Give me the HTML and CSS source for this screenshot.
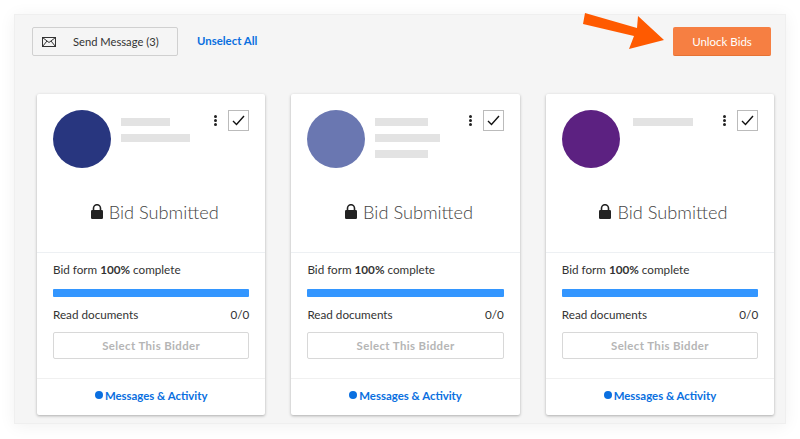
FILE: index.html
```html
<!DOCTYPE html>
<html lang="en">
<head>
    <meta charset="UTF-8">
    <meta name="viewport" content="width=device-width, initial-scale=1.0">
    <title>Unlock Bids</title>
    <link rel="stylesheet" href="styles.css">
</head>
<body>

<div class="panel">
    <div class="toolbar">
        <button class="send-btn">
            <svg class="mail-icon" width="14" height="10" viewBox="0 0 14 10">
                <rect x="0.5" y="0.5" width="13" height="9" fill="none" stroke="#333" stroke-width="1"/>
                <path d="M0.5 0.5L7 5.5L13.5 0.5M0.5 9.5L5 4M13.5 9.5L9 4" fill="none" stroke="#333" stroke-width="1"/>
            </svg>
            <span class="send-label">Send Message (3)</span>
        </button>
        <a href="#" class="unselect">Unselect All</a>
        <button class="unlock-btn">Unlock Bids</button>
    </div>

    <!-- callout pointing at the unlock button -->
    <svg class="arrow" width="82" height="37" viewBox="0 0 82 37">
        <path d="M2 0L54 15L55 3L81 27L46 36L51 23L0 11Z" fill="#ff5a00"/>
    </svg>

    <div class="cards">
        <div class="card">
            <div class="card-top">
                <div class="avatar avatar-navy"></div>
                <div class="name-lines">
                    <span class="line line-49"></span>
                    <span class="line line-69"></span>
                </div>
                <div class="card-tools">
                    <span class="kebab"><i></i><i></i><i></i></span>
                    <span class="check">
                        <svg width="13" height="11" viewBox="0 0 13 11"><path d="M1 6L4.5 9.5L12 1" fill="none" stroke="#111" stroke-width="1.4"/></svg>
                    </span>
                </div>
            </div>
            <div class="status">
                <svg class="lock" width="12" height="15" viewBox="0 0 12 15"><path d="M2.5 6V4.2a3.5 3.5 0 0 1 7 0V6" fill="none" stroke="#222" stroke-width="1.6"/><rect x="0" y="6" width="12" height="9" rx="1.2" fill="#222"/></svg>
                <span>Bid Submitted</span>
            </div>
            <div class="card-body">
                <p class="row">Bid form&nbsp;<b>100%</b>&nbsp;complete</p>
                <div class="bar"></div>
                <p class="row row-split"><span>Read documents</span><span>0/0</span></p>
                <button class="select-btn">Select This Bidder</button>
            </div>
            <div class="card-foot"><a href="#"><i class="dot"></i>Messages &amp; Activity</a></div>
        </div>

        <div class="card">
            <div class="card-top">
                <div class="avatar avatar-slate"></div>
                <div class="name-lines">
                    <span class="line line-53"></span>
                    <span class="line line-65"></span>
                    <span class="line line-53"></span>
                </div>
                <div class="card-tools">
                    <span class="kebab"><i></i><i></i><i></i></span>
                    <span class="check">
                        <svg width="13" height="11" viewBox="0 0 13 11"><path d="M1 6L4.5 9.5L12 1" fill="none" stroke="#111" stroke-width="1.4"/></svg>
                    </span>
                </div>
            </div>
            <div class="status">
                <svg class="lock" width="12" height="15" viewBox="0 0 12 15"><path d="M2.5 6V4.2a3.5 3.5 0 0 1 7 0V6" fill="none" stroke="#222" stroke-width="1.6"/><rect x="0" y="6" width="12" height="9" rx="1.2" fill="#222"/></svg>
                <span>Bid Submitted</span>
            </div>
            <div class="card-body">
                <p class="row">Bid form&nbsp;<b>100%</b>&nbsp;complete</p>
                <div class="bar"></div>
                <p class="row row-split"><span>Read documents</span><span>0/0</span></p>
                <button class="select-btn">Select This Bidder</button>
            </div>
            <div class="card-foot"><a href="#"><i class="dot"></i>Messages &amp; Activity</a></div>
        </div>

        <div class="card">
            <div class="card-top">
                <div class="avatar avatar-purple"></div>
                <div class="name-lines name-lines-single">
                    <span class="line line-60"></span>
                </div>
                <div class="card-tools">
                    <span class="kebab"><i></i><i></i><i></i></span>
                    <span class="check">
                        <svg width="13" height="11" viewBox="0 0 13 11"><path d="M1 6L4.5 9.5L12 1" fill="none" stroke="#111" stroke-width="1.4"/></svg>
                    </span>
                </div>
            </div>
            <div class="status">
                <svg class="lock" width="12" height="15" viewBox="0 0 12 15"><path d="M2.5 6V4.2a3.5 3.5 0 0 1 7 0V6" fill="none" stroke="#222" stroke-width="1.6"/><rect x="0" y="6" width="12" height="9" rx="1.2" fill="#222"/></svg>
                <span>Bid Submitted</span>
            </div>
            <div class="card-body">
                <p class="row">Bid form&nbsp;<b>100%</b>&nbsp;complete</p>
                <div class="bar"></div>
                <p class="row row-split"><span>Read documents</span><span>0/0</span></p>
                <button class="select-btn">Select This Bidder</button>
            </div>
            <div class="card-foot"><a href="#"><i class="dot"></i>Messages &amp; Activity</a></div>
        </div>
    </div>
</div>

</body>
</html>
```

FILE: styles.css
```css
/* Basic reset */
* {
    margin: 0;
    padding: 0;
    box-sizing: border-box;
}

body {
    font-family: Lato, "Open Sans", sans-serif;
    background-color: #fff;
    color: #333;
    width: 800px;
    height: 439px;
    overflow: hidden;
    padding: 14px;
}

/* Outer panel */
.panel {
    position: relative;
    width: 772px;
    height: 410px;
    background-color: #f5f5f5;
    border: 1px solid #efefef;
    box-shadow: 0 2px 16px rgba(0, 0, 0, 0.06);
    padding: 12px 11px 0 22px;
}

/* Toolbar */
.toolbar {
    display: flex;
    align-items: center;
    height: 29px;
    padding-right: 3px;
    margin-left: -5px;
}

.send-btn {
    display: flex;
    align-items: center;
    width: 146px;
    height: 29px;
    padding-left: 9px;
    background-color: #f5f5f5;
    border: 1px solid #d0d0d0;
    border-radius: 2px;
    font-family: inherit;
    font-size: 11.2px;
    color: #333;
}

.send-label {
    margin-left: 17px;
}

.unselect {
    margin-left: 19px;
    margin-bottom: 2px;
    color: #0a6fe0;
    font-size: 11.4px;
    font-weight: 700;
    text-decoration: none;
}

.unlock-btn {
    margin-left: auto;
    width: 98px;
    height: 29px;
    background-color: #f67f42;
    border: none;
    border-bottom: 1px solid #e57234;
    border-radius: 2px;
    color: #fff;
    font-family: inherit;
    font-size: 11.5px;
}

.arrow {
    position: absolute;
    left: 568px;
    top: -2px;
}

/* Bidder cards */
.cards {
    display: grid;
    grid-template-columns: repeat(3, 228.4px);
    column-gap: 26px;
    margin-top: 38px;
}

.card {
    height: 321px;
    background-color: #fff;
    border-radius: 2px;
    box-shadow: 0 1px 3px rgba(0, 0, 0, 0.3);
    display: flex;
    flex-direction: column;
}

.card-top {
    display: flex;
    height: 92px;
    padding: 16px 16px 0;
}

.avatar {
    flex: none;
    width: 58px;
    height: 58px;
    border-radius: 50%;
}

.avatar-navy {
    background-color: #28367f;
}

.avatar-slate {
    background-color: #6a77b1;
}

.avatar-purple {
    background-color: #5c2181;
}

.name-lines {
    display: flex;
    flex-direction: column;
    gap: 8px;
    margin: 8px 0 0 10px;
}

.name-lines-single {
    margin-left: 13px;
}

.line {
    display: block;
    height: 8px;
    background-color: #e3e3e3;
}

.line-49 {
    width: 49px;
}

.line-53 {
    width: 53px;
}

.line-60 {
    width: 60px;
}

.line-65 {
    width: 65px;
}

.line-69 {
    width: 69px;
}

.card-tools {
    display: flex;
    align-items: flex-start;
    margin-left: auto;
}

.kebab {
    display: flex;
    flex-direction: column;
    gap: 1px;
    margin: 5px 11px 0 0;
}

.kebab i {
    display: block;
    width: 3px;
    height: 3px;
    border-radius: 50%;
    background-color: #222;
}

.check {
    display: flex;
    align-items: center;
    justify-content: center;
    width: 21px;
    height: 21px;
    background-color: #fff;
    border: 1px solid #bbb;
}

.status {
    display: flex;
    align-items: center;
    justify-content: center;
    gap: 6px;
    height: 67px;
    padding: 0 0 15px 7px;
    font-size: 18.2px;
    font-weight: 300;
    color: #444;
    border-bottom: 1px solid #edf0f3;
}

.card-body {
    height: 126px;
    padding: 7px 16px 0;
    border-bottom: 1px solid #f0f0f0;
}

.row {
    display: flex;
    font-size: 11.7px;
    line-height: 18px;
    color: #333;
}

.row-split {
    justify-content: space-between;
}

.bar {
    height: 8px;
    margin: 11px 0 8px;
    background-color: #3396ff;
    border-radius: 1px;
}

.select-btn {
    display: block;
    width: 100%;
    height: 27px;
    margin-top: 9px;
    background-color: #fff;
    border: 1px solid #d8d8d8;
    border-radius: 2px;
    color: #b5b5b5;
    font-family: inherit;
    font-size: 11.4px;
    font-weight: 700;
    letter-spacing: 0.4px;
}

.card-foot {
    flex: 1;
    display: flex;
    align-items: center;
    justify-content: center;
    padding-bottom: 4px;
}

.card-foot a {
    display: flex;
    align-items: center;
    color: #0a6fe0;
    font-size: 11.4px;
    font-weight: 700;
    text-decoration: none;
}

.dot {
    width: 8px;
    height: 8px;
    margin-right: 2px;
    border-radius: 50%;
    background-color: #0a6fe0;
}
```
